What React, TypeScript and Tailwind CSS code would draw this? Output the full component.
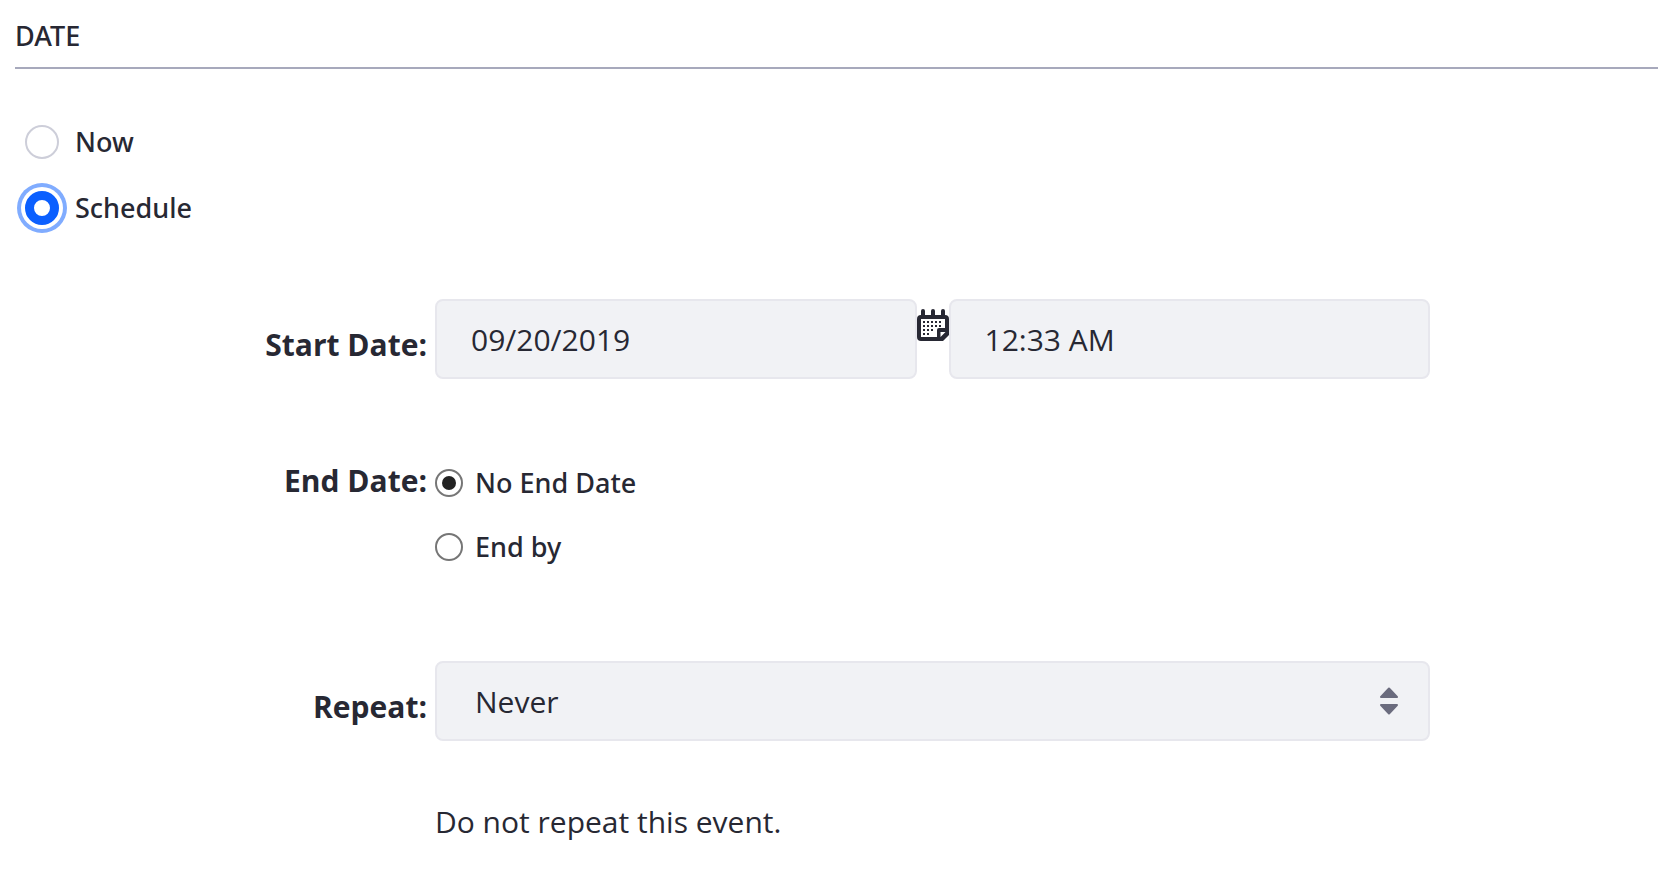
import { useState } from "react";
import type { ReactNode } from "react";

const accentRadio =
  "size-[34px] shrink-0 appearance-none rounded-full border-2 border-[#cdced9] bg-white outline-none checked:border-[9px] checked:border-[#0b5fff] checked:ring-4 checked:ring-[#80acff] checked:ring-offset-4";
const plainRadio =
  "grid size-7 shrink-0 appearance-none place-content-center rounded-full border-2 border-[#767676] bg-white before:size-[14px] before:rounded-full checked:before:bg-[#222222]";
const field =
  "h-20 rounded-lg border-2 border-[#e7e7ed] bg-[#f1f2f5] text-[30px] text-[#272833] outline-none";
const mediumText = "font-['Noto_Sans','Open_Sans',sans-serif] font-medium";

function CalendarIcon() {
  const dots = [
    [6, 13, 5],
    [6, 17, 5],
    [6, 21, 3],
    [6, 25, 2],
  ];
  return (
    <svg viewBox="0 0 32 32" className="mt-[10px] size-8 shrink-0" fill="#272833" aria-hidden="true">
      <rect x="4" y="0" width="4" height="9" rx="2" />
      <rect x="14" y="0" width="4" height="9" rx="2" />
      <rect x="24" y="0" width="4" height="9" rx="2" />
      <path
        fillRule="evenodd"
        d="M4 6H28Q32 6 32 10V26L26 32H4Q0 32 0 28V10Q0 6 4 6ZM4 10V28H20V21Q20 19 22 19H28V10ZM23.5 23V28L28.5 23Z"
      />
      {dots.map(([x, y, count]) =>
        Array.from({ length: count }, (_, i) => (
          <rect key={`${y}-${i}`} x={x + i * 4} y={y - 1} width="2" height="2" />
        )),
      )}
    </svg>
  );
}

function Row({ label, htmlFor, pad, children }: { label: string; htmlFor?: string; pad: string; children: ReactNode }) {
  const style = `w-[412px] shrink-0 text-right text-[30px] leading-10 font-bold ${pad}`;
  return (
    <div className="flex gap-2">
      {htmlFor ? (
        <label htmlFor={htmlFor} className={style}>{label}</label>
      ) : (
        <span id="end-date-label" className={style}>{label}</span>
      )}
      <div className="max-w-[995px] min-w-0 flex-1">{children}</div>
    </div>
  );
}

export default function App() {
  const [when, setWhen] = useState("schedule");
  const [end, setEnd] = useState("none");

  return (
    <form className="bg-white pt-4 pb-11 pl-[15px] font-['Open_Sans','Noto_Sans',sans-serif] text-[27px] text-[#272833]">
      <h2 className={`border-b-2 border-[#a7a9bc] pb-[11px] leading-10 ${mediumText}`}>DATE</h2>

      <div className={`mt-10 pl-[10px] ${mediumText}`} role="radiogroup" aria-label="Date">
        {[["now", "Now"], ["schedule", "Schedule"]].map(([value, text]) => (
          <label key={value} className="flex h-[66px] w-fit items-center gap-4">
            <input
              type="radio"
              name="when"
              className={accentRadio}
              checked={when === value}
              onChange={() => setWhen(value)}
            />
            {text}
          </label>
        ))}
      </div>

      <div className="mt-[58px]">
        <Row label="Start Date:" htmlFor="start-date" pad="pt-[26px]">
          <div className="flex">
            <input id="start-date" type="text" defaultValue="09/20/2019" className={`${field} min-w-0 flex-1 px-[34px]`} />
            <CalendarIcon />
            <input type="text" aria-label="Start time" defaultValue="12:33 AM" className={`${field} min-w-0 flex-1 px-[34px]`} />
          </div>
        </Row>
      </div>

      <div className="mt-[72px]">
        <Row label="End Date:" pad="pt-[10px]">
          <div role="radiogroup" aria-labelledby="end-date-label" className={mediumText}>
            {[["none", "No End Date"], ["by", "End by"]].map(([value, text]) => (
              <label key={value} className="flex h-16 w-fit items-center gap-3">
                <input
                  type="radio"
                  name="end"
                  className={plainRadio}
                  checked={end === value}
                  onChange={() => setEnd(value)}
                />
                {text}
              </label>
            ))}
          </div>
        </Row>
      </div>

      <div className="mt-[82px]">
        <Row label="Repeat:" htmlFor="repeat" pad="pt-[26px]">
          <div className="relative">
            <select id="repeat" className={`${field} w-full appearance-none px-[38px]`}>
              <option>Never</option>
            </select>
            <svg
              viewBox="0 0 20 28"
              className="pointer-events-none absolute top-[26px] right-[31px] h-7 w-5"
              fill="#6b6c7e"
              stroke="#6b6c7e"
              strokeWidth="2"
              strokeLinejoin="round"
              aria-hidden="true"
            >
              <path d="M10 1.5L18 10H2Z" />
              <path d="M10 26.5L18 18H2Z" />
            </svg>
          </div>
          <p className="mt-[61px] text-[30px] leading-10">Do not repeat this event.</p>
        </Row>
      </div>
    </form>
  );
}
